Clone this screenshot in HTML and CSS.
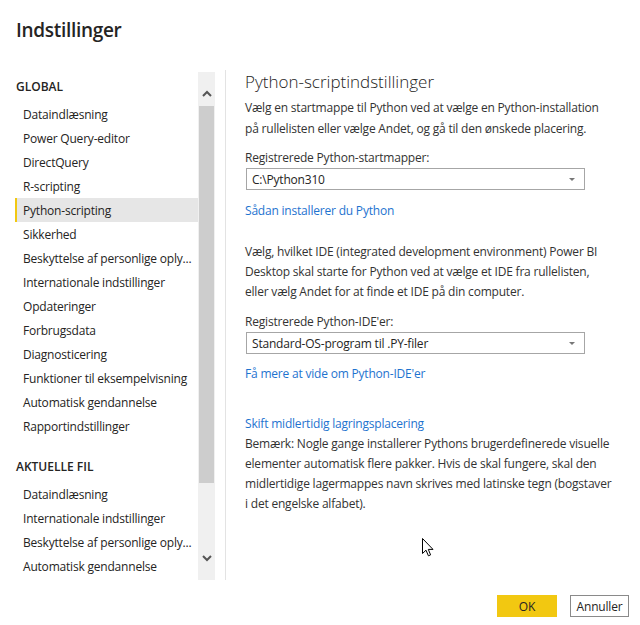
FILE: index.html
```html
<!DOCTYPE html>
<html lang="da">
<head>
<meta charset="utf-8">
<title>Indstillinger</title>
<link rel="stylesheet" href="styles.css">
</head>
<body>
<div class="page">
  <header class="header"><h1 class="title">Indstillinger</h1></header>
  <div class="main">
    <nav class="nav">
      <div class="group">GLOBAL</div>
      <div class="item">Dataindlæsning</div>
      <div class="item">Power Query-editor</div>
      <div class="item">DirectQuery</div>
      <div class="item">R-scripting</div>
      <div class="item selected">Python-scripting</div>
      <div class="item">Sikkerhed</div>
      <div class="item">Beskyttelse af personlige oply...</div>
      <div class="item">Internationale indstillinger</div>
      <div class="item">Opdateringer</div>
      <div class="item">Forbrugsdata</div>
      <div class="item">Diagnosticering</div>
      <div class="item">Funktioner til eksempelvisning</div>
      <div class="item">Automatisk gendannelse</div>
      <div class="item">Rapportindstillinger</div>
      <div class="group group-2">AKTUELLE FIL</div>
      <div class="item">Dataindlæsning</div>
      <div class="item">Internationale indstillinger</div>
      <div class="item">Beskyttelse af personlige oply...</div>
      <div class="item">Automatisk gendannelse</div>
    </nav>
    <div class="scrollbar">
      <div class="sb-btn sb-up"><svg width="10" height="7" viewBox="0 0 10 7"><path d="M1 6 L5 2 L9 6" fill="none" stroke="#555" stroke-width="2"/></svg></div>
      <div class="sb-thumb"></div>
      <div class="sb-track"></div>
      <div class="sb-btn sb-down"><svg width="10" height="7" viewBox="0 0 10 7"><path d="M1 1 L5 5 L9 1" fill="none" stroke="#555" stroke-width="2"/></svg></div>
    </div>
    <div class="divider"></div>
    <section class="content">
      <h2 class="heading">Python-scriptindstillinger</h2>
      <p class="para p1">Vælg en startmappe til Python ved at vælge en Python-installation<br>på rullelisten eller vælge Andet, og gå til den ønskede placering.</p>
      <div class="label l1">Registrerede Python-startmapper:</div>
      <div class="select"><span>C:\Python310</span><span class="caret"></span></div>
      <a class="link k1">Sådan installerer du Python</a>
      <p class="para p2">Vælg, hvilket IDE (integrated development environment) Power BI<br>Desktop skal starte for Python ved at vælge et IDE fra rullelisten,<br>eller vælg Andet for at finde et IDE på din computer.</p>
      <div class="label l2">Registrerede Python-IDE'er:</div>
      <div class="select"><span>Standard-OS-program til .PY-filer</span><span class="caret"></span></div>
      <a class="link k2">Få mere at vide om Python-IDE'er</a>
      <a class="link k3">Skift midlertidig lagringsplacering</a>
      <p class="para note">Bemærk: Nogle gange installerer Pythons brugerdefinerede visuelle<br>elementer automatisk flere pakker. Hvis de skal fungere, skal den<br>midlertidige lagermappes navn skrives med latinske tegn (bogstaver<br>i det engelske alfabet).</p>
    </section>
  </div>
  <footer class="footer">
    <button class="btn btn-ok">OK</button>
    <button class="btn btn-cancel">Annuller</button>
  </footer>
  <svg class="cursor" width="12" height="19" viewBox="0 0 12 19"><path d="M0.5 0.5 L0.5 15.5 L4 12.2 L6.4 17.8 L8.6 16.9 L6.3 11.4 L11 11.4 Z" fill="#fff" stroke="#000" stroke-width="1"/></svg>
</div>
</body>
</html>
```

FILE: styles.css
```css
* { box-sizing: border-box; }
html, body { margin: 0; padding: 0; background: #fff; }
body {
  font-family: "Open Sans", "Noto Sans", "Liberation Sans", sans-serif;
  font-size: 12px;
  color: #252423;
}
.page {
  position: relative;
  width: 640px;
  height: 625px;
  display: flex;
  flex-direction: column;
  overflow: hidden;
}
.header { height: 70px; padding: 16px 0 0 16px; }
.title {
  margin: 0;
  font-size: 19px;
  line-height: 28px;
  font-weight: 600;
  letter-spacing: -0.3px;
  color: #252423;
}
.main { display: flex; height: 510px; }
.nav { width: 198px; padding-left: 15px; overflow: hidden; }
.group {
  height: 32px;
  line-height: 32px;
  padding: 1px 0 0 1px;
  font-weight: 600;
  font-size: 12px;
  color: #252423;
}
.group-2 { margin-top: 12px; }
.item {
  height: 24px;
  line-height: 24px;
  padding: 1px 0 0 8px;
  white-space: nowrap;
  color: #252423;
  letter-spacing: -0.2px;
}
.item.selected { background: #e6e6e6; box-shadow: inset 2px 0 0 #f2c811; }
.scrollbar {
  width: 17px;
  margin-top: 2px;
  background: #f0f0f0;
  display: flex;
  flex-direction: column;
}
.sb-btn { display: flex; justify-content: center; }
.sb-up { height: 34px; padding-top: 18px; }
.sb-thumb { height: 377px; margin: 0 1px; background: #cdcdcd; }
.sb-track { flex: 1; }
.sb-down { height: 36px; padding-top: 11px; }
.divider { width: 1px; margin-left: 10px; background: #e3e3e3; }
.content { flex: 1; padding-left: 19px; display: flex; flex-direction: column; align-items: flex-start; }
.heading {
  margin: 0;
  font-size: 17px;
  line-height: 24px;
  font-weight: 300;
  color: #252423;
}
.para { margin: 0; color: #333; white-space: nowrap; letter-spacing: -0.2px; }
.p1 { margin-top: 3px; line-height: 21px; }
.label { line-height: 20px; color: #333; letter-spacing: -0.2px; }
.l1 { margin-top: 9px; }
.select {
  margin-left: 1px;
  width: 339px;
  height: 22px;
  border: 1px solid #a6a6a6;
  padding: 0 9px 0 5px;
  display: flex;
  align-items: center;
  justify-content: space-between;
  color: #252423;
  letter-spacing: -0.2px;
}
.caret {
  width: 0; height: 0;
  border-left: 3px solid transparent;
  border-right: 3px solid transparent;
  border-top: 3px solid #777;
}
.link { line-height: 20px; color: #1e73cf; letter-spacing: -0.2px; }
.k1 { margin-top: 11px; }
.p2 { margin-top: 21px; line-height: 20px; }
.l2 { margin-top: 10px; }
.k2 { margin-top: 10px; }
.k3 { margin-top: 30px; }
.note { line-height: 20px; }
.footer {
  display: flex;
  justify-content: flex-end;
  gap: 13px;
  padding: 15px 11px 0 0;
}
.btn {
  font-family: inherit;
  font-size: 12px;
  height: 22px;
  width: 60px;
  padding: 0;
  color: #252423;
  letter-spacing: -0.2px;
}
.btn-ok { background: #f2c811; border: 1px solid #f2c811; }
.btn-cancel { width: 59px; background: #fff; border: 1px solid #8a8a8a; }
.cursor { position: absolute; left: 422px; top: 538px; }
```
